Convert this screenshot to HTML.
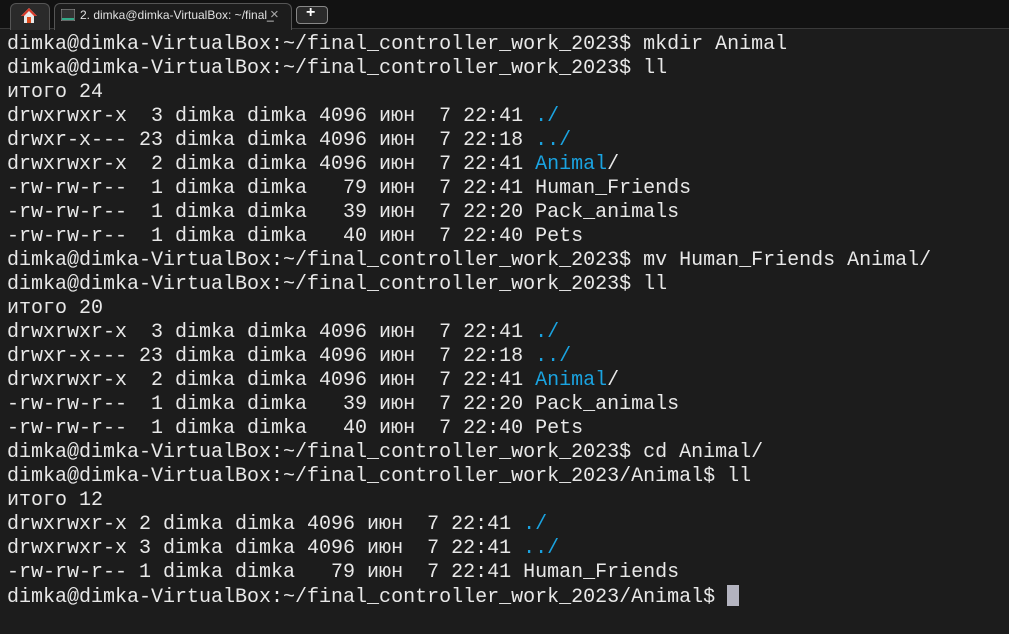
<!DOCTYPE html>
<html><head><meta charset="utf-8"><style>
html,body{margin:0;padding:0;width:1009px;height:634px;overflow:hidden;background:#1c1c1c;}
.bar{position:absolute;left:0;top:0;width:1009px;height:28px;background:#121212;border-bottom:1px solid #3a3a3a;}
.tab{position:absolute;top:3px;height:26px;background:#1c1c1c;border:1px solid #555;border-bottom:none;border-radius:6px 6px 0 0;}
pre{position:absolute;left:7px;top:33px;margin:0;font-family:"Liberation Mono","DejaVu Sans Mono",monospace;font-size:20px;line-height:24px;color:#e8e8e8;}
.b{color:#1aa3e0}
.cur{display:inline-block;width:12px;height:21px;background:#b4b4c0;vertical-align:-4px;}
.t{position:absolute;left:80px;top:8px;font:12px "Liberation Sans",sans-serif;color:#e0e0e0;white-space:nowrap;}
</style></head><body>
<div class="bar">
<div class="tab" style="left:10px;width:38px;background:#2a2a2a"></div>
<div class="tab" style="left:54px;width:236px"></div>
<div class="tab" style="left:296px;width:30px;top:6px;height:16px;border-radius:4px;border:1px solid #888;background:#2a2a2a"></div>
<svg style="position:absolute;left:20px;top:7px" width="18" height="17"><path d="M9 1 L1 9 H4 V16 H14 V9 H17 Z" fill="#e8e8e8"/><rect x="7" y="10" width="4" height="6" fill="#e04a1c"/><path d="M9 1 L1 9 H4 L9 4 L14 9 H17 Z" fill="#d83a2a"/></svg>
<svg style="position:absolute;left:61px;top:9px" width="14" height="12"><rect x="0" y="0" width="14" height="12" fill="#333" stroke="#999"/><rect x="1" y="9" width="12" height="2" fill="#3a8"/></svg>
<div class="t">2. dimka@dimka-VirtualBox: ~/final_</div>
<div style="position:absolute;left:270px;top:6px;color:#aaa;font:15px 'Liberation Sans',sans-serif">×</div>
<div style="position:absolute;left:306px;top:4px;color:#fff;font:bold 16px 'Liberation Sans',sans-serif">+</div>
</div>
<pre>dimka@dimka-VirtualBox:~/final_controller_work_2023$ mkdir Animal
dimka@dimka-VirtualBox:~/final_controller_work_2023$ ll
итого 24
drwxrwxr-x  3 dimka dimka 4096 июн  7 22:41 <span class="b">./</span>
drwxr-x--- 23 dimka dimka 4096 июн  7 22:18 <span class="b">../</span>
drwxrwxr-x  2 dimka dimka 4096 июн  7 22:41 <span class="b">Animal</span>/
-rw-rw-r--  1 dimka dimka   79 июн  7 22:41 Human_Friends
-rw-rw-r--  1 dimka dimka   39 июн  7 22:20 Pack_animals
-rw-rw-r--  1 dimka dimka   40 июн  7 22:40 Pets
dimka@dimka-VirtualBox:~/final_controller_work_2023$ mv Human_Friends Animal/
dimka@dimka-VirtualBox:~/final_controller_work_2023$ ll
итого 20
drwxrwxr-x  3 dimka dimka 4096 июн  7 22:41 <span class="b">./</span>
drwxr-x--- 23 dimka dimka 4096 июн  7 22:18 <span class="b">../</span>
drwxrwxr-x  2 dimka dimka 4096 июн  7 22:41 <span class="b">Animal</span>/
-rw-rw-r--  1 dimka dimka   39 июн  7 22:20 Pack_animals
-rw-rw-r--  1 dimka dimka   40 июн  7 22:40 Pets
dimka@dimka-VirtualBox:~/final_controller_work_2023$ cd Animal/
dimka@dimka-VirtualBox:~/final_controller_work_2023/Animal$ ll
итого 12
drwxrwxr-x 2 dimka dimka 4096 июн  7 22:41 <span class="b">./</span>
drwxrwxr-x 3 dimka dimka 4096 июн  7 22:41 <span class="b">../</span>
-rw-rw-r-- 1 dimka dimka   79 июн  7 22:41 Human_Friends
dimka@dimka-VirtualBox:~/final_controller_work_2023/Animal$ <span class="cur"></span></pre>
</body></html>
